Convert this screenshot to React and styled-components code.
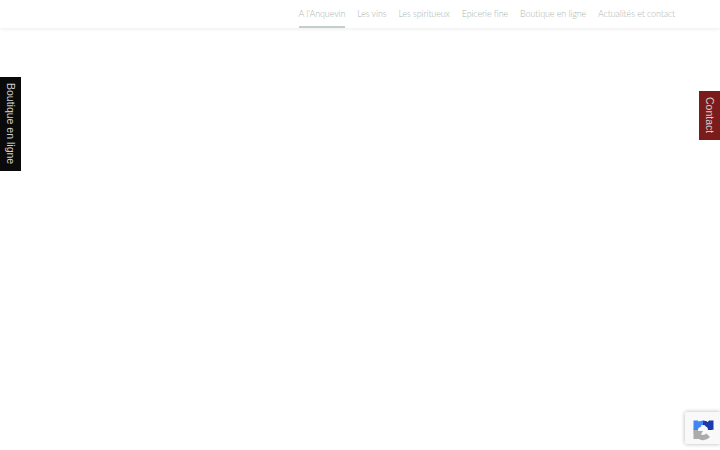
import React from 'react';
import styled, { createGlobalStyle } from 'styled-components';

const GlobalStyle = createGlobalStyle`
  html, body {
    margin: 0;
    padding: 0;
    height: 100%;
    background: #fff;
    overflow: hidden;
    font-family: "Lato", "Liberation Sans", sans-serif;
  }
`;

const Header = styled.header`
  height: 28px;
  background: #fff;
  box-shadow: 0 1px 4px rgba(0, 0, 0, 0.08);
  display: flex;
  justify-content: flex-end;
  padding-right: 45px;
`;

const Nav = styled.nav`
  display: flex;
  gap: 12px;
`;

const NavItem = styled.a`
  display: block;
  height: 28px;
  box-sizing: border-box;
  padding-top: 7px;
  font-size: 9px;
  font-weight: 300;
  letter-spacing: -0.12px;
  line-height: 13px;
  white-space: nowrap;
  color: #a9b7b2;
  border-bottom: 2px solid ${(p) => (p.$active ? '#c3cfcb' : 'transparent')};
`;

const SideTab = styled.a`
  position: fixed;
  top: ${(p) => p.$top}px;
  ${(p) => p.$side}: 0;
  width: ${(p) => p.$width}px;
  height: ${(p) => p.$height}px;
  background: ${(p) => p.$bg};
  color: #cfcfcf;
  writing-mode: vertical-rl;
  display: flex;
  align-items: center;
  justify-content: center;
  font-family: "Liberation Sans", sans-serif;
  font-size: 10.5px;
  white-space: nowrap;
`;

const Badge = styled.div`
  position: fixed;
  right: 0;
  top: 412px;
  width: 35px;
  height: 32px;
  background: #f9f9f9;
  border-radius: 2px 0 0 2px;
  box-shadow: 0 0 4px rgba(0, 0, 0, 0.3);
  display: flex;
  align-items: center;
  padding: 3px 0 0 7px;
  box-sizing: border-box;
`;

const ReCaptchaIcon = () => (
  <svg width="22" height="22" viewBox="0 0 22 22" fill="none">
    <path d="M11 1.5 A9.5 9.5 0 0 1 20.5 11 L16 11 A5 5 0 0 0 11 6 Z" fill="#1c3aa9" />
    <path d="M17 1.5 L21.5 1.5 L21.5 11 L13 7 Z" fill="#1c3aa9" />
    <path d="M1.5 11 A9.5 9.5 0 0 1 11 1.5 L11 6 A5 5 0 0 0 6 11 Z" fill="#4285f4" />
    <path d="M1.5 1.5 L6 1.5 L9.5 7.5 L1.5 11 Z" fill="#4285f4" />
    <path d="M1.5 11 L6 11 A5 5 0 0 0 14.5 14.5 L18 18 A9.5 9.5 0 0 1 1.5 11 Z" fill="#ababab" />
    <path d="M1.5 12 L11 12 L6 20 L1.5 20 Z" fill="#ababab" />
  </svg>
);

const items = ["A l'Anquevin", 'Les vins', 'Les spiritueux', 'Epicerie fine', 'Boutique en ligne', 'Actualités et contact'];

export default function App() {
  return (
    <>
      <GlobalStyle />
      <Header>
        <Nav>
          {items.map((item, i) => (
            <NavItem key={item} $active={i === 0}>{item}</NavItem>
          ))}
        </Nav>
      </Header>
      <SideTab $side="left" $top={77} $width={21} $height={94} $bg="#0a0a0a">Boutique en ligne</SideTab>
      <SideTab $side="right" $top={91} $width={21} $height={49} $bg="#7b1c1c">Contact</SideTab>
      <Badge><ReCaptchaIcon /></Badge>
    </>
  );
}
